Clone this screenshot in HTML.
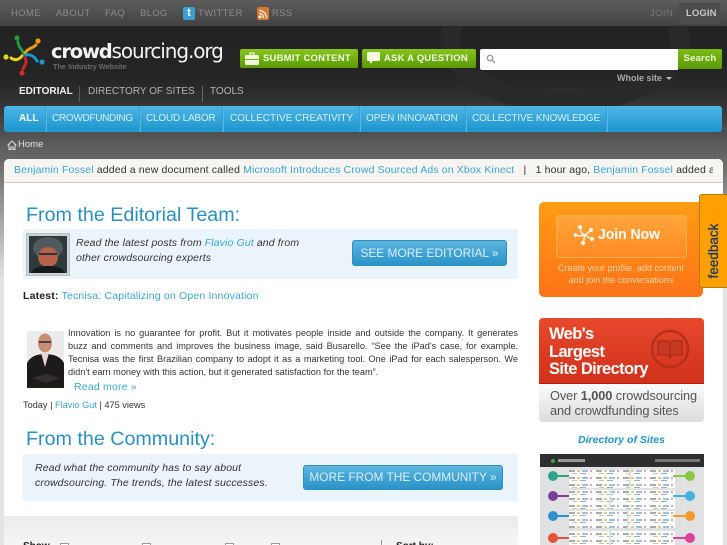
<!DOCTYPE html>
<html style="overflow:hidden;height:545px;width:727px"><head><meta charset="utf-8"><style>
*{box-sizing:border-box}
html,body{margin:0;padding:0}
body{width:727px;height:545px;overflow:hidden;position:relative;background:#e4e4e4;font-family:"Liberation Sans",sans-serif}
.a{position:absolute;white-space:nowrap}
a,.l{color:#3aa5d6;text-decoration:none}
.top{font-size:9.5px;color:#8c8a8e;letter-spacing:.35px;top:8px;line-height:11px}
.nav{font-size:10px;color:#b4b4b4;top:86px;line-height:12px}
.cat{font-size:10px;color:#d6eef9;top:113px;line-height:12px}
.sep{position:absolute;width:1px;top:106px;height:26px;background:#3a9fd0;box-shadow:1px 0 0 #57b9e6}
.gb{position:absolute;top:49px;height:19px;border-radius:2px;background:linear-gradient(#86c61a,#5a9a06);color:#f4f9e6;font-weight:bold;font-size:9.5px;letter-spacing:.2px;line-height:19px;white-space:nowrap}
.h{font-size:19.7px;color:#2b90c0;line-height:23px}
.band{position:absolute;background:#ebf4fa}
.it{font-size:10.5px;font-style:italic;color:#333;line-height:15px;letter-spacing:.12px}
.bb{position:absolute;border-radius:3px;background:linear-gradient(#5db5e0,#2a93c7);border:1px solid #2e8fc0;color:#d8eff9;font-size:11.9px;text-align:center;white-space:nowrap}
.p{font-size:9.2px;line-height:13px;color:#333;left:68px;width:450px;white-space:normal;text-align:justify;text-align-last:justify}
</style></head><body>
<div class="a" style="left:0;top:0;width:727px;height:27px;background:linear-gradient(#5c5c5c,#424242)"></div>
<div class="a" style="left:0;top:26px;width:727px;height:134px;background:linear-gradient(#222 0,#252525 40%,#3a3a3a 65%,#5e5e5e 90%,#686868 100%)"></div>
<div class="a" style="left:0;top:160px;width:727px;height:120px;background:linear-gradient(#686868,#e4e4e4)"></div>
<svg class="a" style="left:400px;top:26px" width="327" height="80"><ellipse cx="165" cy="14" rx="115" ry="62" fill="none" stroke="#292929" stroke-width="20"/></svg>

<div class="a top" style="left:11px">HOME</div>
<div class="a top" style="left:56px">ABOUT</div>
<div class="a top" style="left:105px">FAQ</div>
<div class="a top" style="left:140px">BLOG</div>
<div class="a" style="left:183px;top:7px;width:12px;height:13px;border-radius:2px;background:#3c9fd2;color:#fff;font-weight:bold;font-size:11px;line-height:13px;text-align:center">t</div>
<div class="a top" style="left:198px">TWITTER</div>
<svg class="a" style="left:257px;top:7px" width="12" height="13"><rect width="12" height="13" rx="2" fill="#d9772f"/><circle cx="3" cy="10" r="1.4" fill="#fff"/><path d="M2 6.500a4.500 4.500 0 0 1 4.500 4.500M2 3.500a7.500 7.500 0 0 1 7.500 7.500" fill="none" stroke="#fff" stroke-width="1.300"/></svg>
<div class="a top" style="left:272px">RSS</div>
<div class="a top" style="left:650px;color:#777">JOIN</div>
<div class="a" style="left:679px;top:3px;width:41px;height:21px;background:#4c4c4c"></div>
<div class="a top" style="left:686px;color:#c8c8c8;font-weight:bold;letter-spacing:.1px">LOGIN</div>

<svg class="a" style="left:3px;top:34px" width="42" height="42" fill="none" stroke-width="3" stroke-linecap="round">
<path d="M21 20C19 15 15 13 15 8" stroke="#1f9d3a"/><circle cx="14" cy="4" r="2.600" fill="#1f9d3a"/>
<path d="M22 19C25 14 29 15 33 11" stroke="#f09a12"/><circle cx="35" cy="7" r="2.600" fill="#f09a12"/>
<path d="M23 21C28 20 32 23 34 27" stroke="#1a95d0"/><circle cx="39" cy="28" r="2.600" fill="#1a95d0"/>
<path d="M22 24C25 29 21 32 20 35" stroke="#c8262a"/><circle cx="19" cy="39" r="2.600" fill="#d42a2a"/>
<path d="M19 22C15 27 11 26 8 24" stroke="#e6d41a"/><circle cx="3" cy="23" r="2.600" fill="#e6d41a"/>
</svg>
<div class="a" style="left:51px;top:37px;font-size:20px;line-height:28px;color:#f2f2f2;font-family:'DejaVu Sans',sans-serif;letter-spacing:-1.08px"><span style="font-weight:bold;font-size:19.5px;letter-spacing:-1.2px">crowd</span>sourcing.org</div>
<div class="a" style="left:53px;top:62px;font-size:7.300px;line-height:10px;font-weight:bold;color:#6c6c6c">The Industry Website</div>

<div class="gb" style="left:240px;width:118px;padding-left:23px">SUBMIT CONTENT</div>
<svg class="a" style="left:245px;top:52px" width="14" height="13"><path d="M5 3V1h4v2" fill="none" stroke="#f1f8df" stroke-width="1.300"/><rect y="3" width="14" height="10" rx="1" fill="#f1f8df"/><rect y="7" width="14" height="1" fill="#7ab514"/></svg>
<div class="gb" style="left:362px;width:114px;padding-left:22px">ASK A QUESTION</div>
<svg class="a" style="left:367px;top:52px" width="13" height="13"><path d="M1 0h11a1 1 0 0 1 1 1v7a1 1 0 0 1-1 1H6l-3 3V9H1a1 1 0 0 1-1-1V1a1 1 0 0 1 1-1z" fill="#f1f8df"/></svg>
<div class="a" style="left:480px;top:49px;width:198px;height:21px;background:#fff;border-radius:2px 0 0 2px"></div>
<svg class="a" style="left:486px;top:54px" width="10" height="10" fill="none" stroke="#999" stroke-width="1.400"><circle cx="4" cy="4" r="2.700"/><path d="M6 6l3 3"/></svg>
<div class="a" style="left:678px;top:49px;width:44px;height:20px;background:linear-gradient(#7dbc15,#5a9a06);border-radius:0 2px 2px 0;color:#eef7da;font-weight:bold;font-size:9.500px;line-height:20px;text-align:center;letter-spacing:.2px">Search</div>
<div class="a" style="left:617px;top:72px;font-size:9px;line-height:12px;font-weight:bold;color:#a8a8a8">Whole site</div>
<div class="a" style="left:666px;top:77px;border:3px solid transparent;border-top-color:#bbb;border-bottom:0"></div>

<div class="a nav" style="left:19px;color:#f0f0f0;font-weight:bold">EDITORIAL</div>
<div class="a" style="left:79px;top:86px;width:1px;height:16px;background:#5c5c5c"></div>
<div class="a nav" style="left:88px">DIRECTORY OF SITES</div>
<div class="a" style="left:202px;top:86px;width:1px;height:16px;background:#666"></div>
<div class="a nav" style="left:210px">TOOLS</div>

<div class="a" style="left:4px;top:106px;width:718px;height:26px;border-radius:3px;background:linear-gradient(#4db6e6,#1d95cd)"></div>
<div class="a cat" style="left:19px;color:#fff;font-weight:bold">ALL</div><div class="sep" style="left:45px"></div>
<div class="a cat" style="left:52px;letter-spacing:-.3px">CROWDFUNDING</div><div class="sep" style="left:139px"></div>
<div class="a cat" style="left:146px;letter-spacing:-.2px">CLOUD LABOR</div><div class="sep" style="left:222px"></div>
<div class="a cat" style="left:230px">COLLECTIVE CREATIVITY</div><div class="sep" style="left:359px"></div>
<div class="a cat" style="left:366px">OPEN INNOVATION</div><div class="sep" style="left:465px"></div>
<div class="a cat" style="left:472px;letter-spacing:-.1px">COLLECTIVE KNOWLEDGE</div><div class="sep" style="left:606px"></div>

<svg class="a" style="left:7px;top:140px" width="10" height="10" fill="none" stroke="#e0e0e0" stroke-width="1"><path d="M.5 5.500L5 1l4.500 4.500M2 4.500v5h2V7h2v2.500h2v-5"/></svg>
<div class="a" style="left:18px;top:139px;font-size:9.500px;line-height:12px;color:#e4e4e4">Home</div>

<div class="a" style="left:4px;top:159px;width:719px;height:386px;background:#fff;border-radius:5px 5px 0 0"></div>
<div class="a" style="left:4px;top:159px;width:719px;height:24px;background:#f6f5f1;border-bottom:1px solid #cfccc5;border-radius:5px 5px 0 0"></div>
<div class="a" style="left:14px;top:164px;width:699px;overflow:hidden;font-size:10.5px;line-height:13px;color:#333;letter-spacing:.14px"><a>Benjamin Fossel</a> added a new document called <a>Microsoft Introduces Crowd Sourced Ads on Xbox Kinect</a> &nbsp;&nbsp;|&nbsp;&nbsp; 1 hour ago, <a>Benjamin Fossel</a> added a new</div>

<div class="a h" style="left:26px;top:204px">From the Editorial Team:</div>
<div class="band" style="left:23px;top:229px;width:495px;height:50px"></div>
<div class="a" style="left:26px;top:233px;width:44px;height:43px;background:#ccd3d3;border:1px solid #bdbdbd"></div>
<svg class="a" style="left:29px;top:236px" width="38" height="37"><rect width="38" height="37" fill="#2d3a3e"/><ellipse cx="19" cy="12" rx="15" ry="11" fill="#50595e"/><ellipse cx="19" cy="21" rx="10" ry="10" fill="#b5634a"/><rect x="10" y="17" width="18" height="2" fill="#3a3030"/><path d="M2 37c3-6 9-7 17-7s14 1 17 7z" fill="#141a1c"/></svg>
<div class="a it" style="left:76px;top:236px">Read the latest posts from <a>Flavio Gut</a> and from<br>other crowdsourcing experts</div>
<div class="bb" style="left:352px;top:240px;width:155px;height:26px;line-height:24px">SEE MORE EDITORIAL »</div>

<div class="a" style="left:23px;top:290px;font-size:10.5px;line-height:13px;color:#222;letter-spacing:.17px"><b>Latest:</b> <a>Tecnisa: Capitalizing on Open Innovation</a></div>
<svg class="a" style="left:27px;top:331px" width="37" height="57"><rect width="37" height="57" fill="#ebebeb"/><ellipse cx="18" cy="12" rx="7" ry="9.500" fill="#c98d72"/><rect x="12" y="10" width="12" height="2" fill="#444"/><path d="M0 57V32c3-6 9-9 18-9s16 3 19 9v25z" fill="#1d1a1a"/><path d="M14 22l4 14 4-14z" fill="#e8d4d8"/><path d="M5 47l14-4 14 4-14 5z" fill="#332f2f"/></svg>
<div class="a p" style="top:327px">Innovation is no guarantee for profit. But it motivates people inside and outside the company. It generates</div>
<div class="a p" style="top:340px">buzz and comments and improves the business image, said Busarello. “See the iPad's case, for example.</div>
<div class="a p" style="top:353px">Tecnisa was the first Brazilian company to adopt it as a marketing tool. One iPad for each salesperson. We</div>
<div class="a p" style="top:366px;text-align-last:left">didn't earn money with this action, but it generated satisfaction for the team”.</div>
<div class="a" style="left:74px;top:380px;font-size:10.500px;line-height:14px;color:#3aa5d6;letter-spacing:.2px">Read more »</div>
<div class="a" style="left:23px;top:399px;font-size:9.200px;line-height:12px;color:#333">Today | <a>Flavio Gut</a> | 475 views</div>

<div class="a h" style="left:26px;top:428px">From the Community:</div>
<div class="band" style="left:23px;top:454px;width:495px;height:47px"></div>
<div class="a it" style="left:35px;top:461px">Read what the community has to say about<br>crowdsourcing. The trends, the latest successes.</div>
<div class="bb" style="left:303px;top:465px;width:200px;height:25px;line-height:23px">MORE FROM THE COMMUNITY »</div>

<div class="a" style="left:4px;top:516px;width:514px;height:29px;background:linear-gradient(#ebebeb,#f5f5f5)"></div>
<div class="a" style="left:23px;top:541px;font-size:10px;font-weight:bold;color:#222;line-height:12px">Show</div>
<div class="a" style="left:60px;top:543px;width:9px;height:9px;border:1px solid #999;background:#fff"></div>
<div class="a" style="left:142px;top:543px;width:9px;height:9px;border:1px solid #999;background:#fff"></div>
<div class="a" style="left:225px;top:543px;width:9px;height:9px;border:1px solid #999;background:#fff"></div>
<div class="a" style="left:271px;top:543px;width:9px;height:9px;border:1px solid #999;background:#fff"></div>
<div class="a" style="left:381px;top:540px;width:1px;height:5px;background:#999"></div>
<div class="a" style="left:396px;top:541px;font-size:10px;font-weight:bold;color:#222;line-height:12px">Sort by:</div>

<div class="a" style="left:539px;top:202px;width:164px;height:95px;border-radius:5px;background:linear-gradient(#ff9c14,#ff7318)"></div>
<div class="a" style="left:556px;top:215px;width:131px;height:43px;border-radius:3px;background:linear-gradient(#ffa63a,#ff8a25);border:1px solid #ffae50"></div>
<svg class="a" style="left:574px;top:225px" width="20" height="20" fill="none" stroke="#fff" stroke-width="1.300"><path d="M10 10C7 8 6 5 6 2M10 10C13 9 15 7 17 5M10 10C13 11 15 13 18 14M10 10C11 13 10 15 9 18M10 10C7 11 4 11 1 10"/><circle cx="6" cy="2" r="1.300" fill="#fff"/><circle cx="17" cy="5" r="1.300" fill="#fff"/><circle cx="18" cy="14" r="1.300" fill="#fff"/><circle cx="9" cy="18" r="1.300" fill="#fff"/><circle cx="1" cy="10" r="1.300" fill="#fff"/></svg>
<div class="a" style="left:598px;top:225px;font-size:15px;line-height:19px;font-weight:bold;color:#fff;transform-origin:left;transform:scaleX(.93)">Join Now</div>
<div class="a" style="left:539px;top:262px;width:164px;text-align:center;font-size:9px;line-height:12px;color:#ffd5a8">Create your profile, add content<br>and join the conversations</div>

<div class="a" style="left:699px;top:194px;width:28px;height:94px;background:#ffa000;border:1px solid #b67c10;border-right:0;border-radius:3px 0 0 3px"></div>
<div class="a" style="left:714px;top:251px;transform:translate(-50%,-50%) rotate(-90deg);font-size:13.5px;color:#1d3a5e;line-height:16px;-webkit-text-stroke:.3px #1d3a5e">feedback</div>

<div class="a" style="left:539px;top:318px;width:165px;height:66px;background:linear-gradient(#e8492c,#d0311a);border-radius:4px 4px 0 0;border-bottom:1px solid #c01a10"></div>
<div class="a" style="left:539px;top:384px;width:165px;height:38px;background:linear-gradient(#fbfbfb,#dcdcdc);border-radius:0 0 4px 4px"></div>
<div class="a" style="left:549px;top:326px;font-size:16.5px;line-height:17.500px;font-weight:bold;color:#fff;letter-spacing:-.6px">Web's<br>Largest<br>Site Directory</div>
<svg class="a" style="left:650px;top:329px" width="40" height="40" fill="none" stroke="#b5301b" stroke-width="1.800"><circle cx="20" cy="20" r="18" stroke-width="2.500"/><path d="M8 12c5-1 9-1 12 2v14c-3-3-7-3-12-2zM32 12c-5-1-9-1-12 2v14c3-3 7-3 12-2z" fill="#c43a22"/></svg>
<div class="a" style="left:550px;top:388px;font-size:12.8px;line-height:15px;color:#555;letter-spacing:-.1px">Over <b>1,000</b> crowdsourcing<br>and crowdfunding sites</div>
<div class="a" style="left:539px;top:434px;width:165px;text-align:center;font-size:10.5px;line-height:13px;font-weight:bold;font-style:italic;color:#1f93d3">Directory of Sites</div>

<svg class="a" style="left:540px;top:454px" width="164" height="91">
<defs><pattern id="n" width="27" height="7" patternUnits="userSpaceOnUse"><rect width="27" height="7" fill="#fff"/><rect x="2" y="2" width="6" height="2" fill="#aaa"/><rect x="10" y="2" width="3" height="2" fill="#e6c68c"/><rect x="15" y="2" width="6" height="2" fill="#9cc3de"/><rect x="23" y="2" width="2" height="2" fill="#dfa6a6"/><rect x="5" y="5" width="5" height="1" fill="#b4d3a6"/><rect x="13" y="5" width="6" height="1" fill="#aaa"/></pattern></defs>
<rect width="164" height="91" fill="#dfe1e2"/><rect width="164" height="13" fill="#2e2e2e"/>
<circle cx="13" cy="7" r="2" fill="#4aa04a"/><rect x="18" y="5" width="27" height="3" fill="#999"/><rect x="115" y="5" width="45" height="3" fill="#777"/>
<g fill="url(#n)"><rect x="29" y="16" width="60" height="18"/><rect x="91" y="16" width="44" height="18"/><rect x="29" y="36" width="40" height="19"/><rect x="71" y="36" width="64" height="19"/><rect x="29" y="57" width="58" height="17"/><rect x="89" y="57" width="46" height="17"/><rect x="29" y="77" width="40" height="14"/><rect x="71" y="77" width="64" height="14"/></g>
<circle cx="13" cy="22" r="5" fill="#2fa58a"/><rect x="15" y="21" width="14" height="2" fill="#2fa58a"/><circle cx="13" cy="42" r="5" fill="#7b3f98"/><rect x="15" y="41" width="14" height="2" fill="#7b3f98"/><circle cx="13" cy="62" r="5" fill="#2f8fce"/><rect x="15" y="61" width="14" height="2" fill="#2f8fce"/><circle cx="13" cy="84" r="5" fill="#e8503a"/><rect x="15" y="83" width="14" height="2" fill="#e8503a"/><circle cx="150" cy="22" r="5" fill="#8cc63f"/><rect x="133" y="21" width="14" height="2" fill="#8cc63f"/><circle cx="150" cy="42" r="5" fill="#43b3dc"/><rect x="133" y="41" width="14" height="2" fill="#43b3dc"/><circle cx="150" cy="62" r="5" fill="#f39a2d"/><rect x="133" y="61" width="14" height="2" fill="#f39a2d"/><circle cx="150" cy="84" r="5" fill="#e0409a"/><rect x="133" y="83" width="14" height="2" fill="#e0409a"/>
</svg>
</body></html>
